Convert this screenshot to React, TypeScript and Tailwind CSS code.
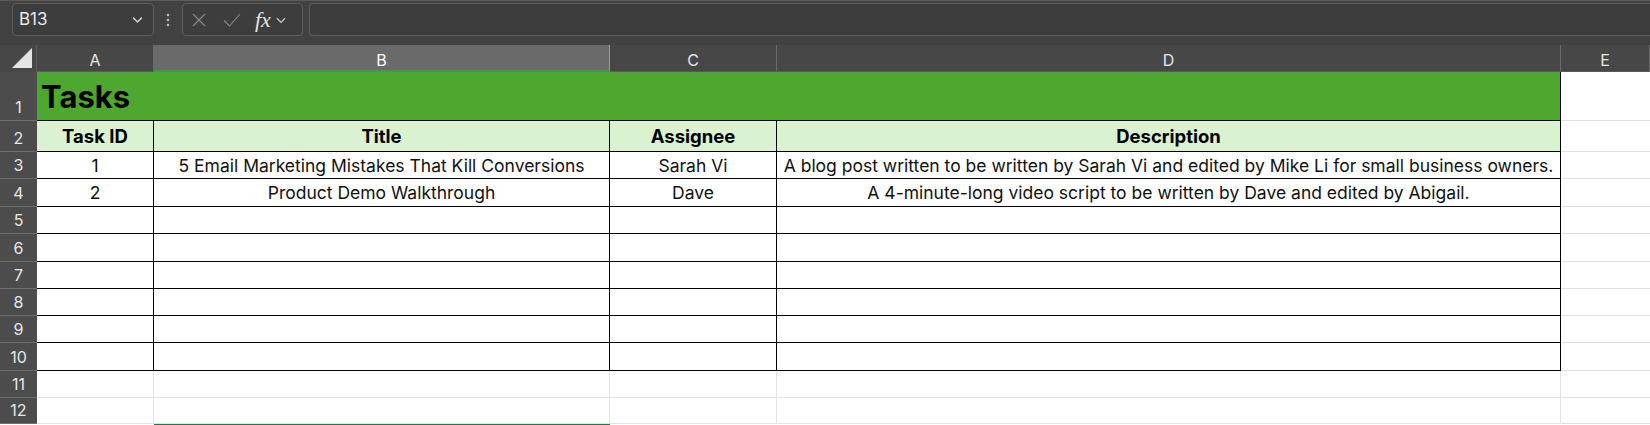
import React from "react";

const COLS = [
  { key: "A", w: 117 },
  { key: "B", w: 456 },
  { key: "C", w: 167 },
  { key: "D", w: 784 },
  { key: "E", w: 89 },
];

const ROW_H = [27, 28, 27, 28, 27, 27, 27, 28, 27, 26];

const TASKS = [
  {
    id: "1",
    title: "5 Email Marketing Mistakes That Kill Conversions",
    assignee: "Sarah Vi",
    description:
      "A blog post written to be written by Sarah Vi and edited by Mike Li for small business owners.",
  },
  {
    id: "2",
    title: "Product Demo Walkthrough",
    assignee: "Dave",
    description: "A 4-minute-long video script to be written by Dave and edited by Abigail.",
  },
];

function Chevron({ className }: { className?: string }) {
  return (
    <svg viewBox="0 0 12 12" className={className} fill="none" stroke="currentColor" strokeWidth="1.2">
      <path d="M2.5 4.5 6 8l3.5-3.5" />
    </svg>
  );
}

function Toolbar() {
  return (
    <div className="flex h-[45px] items-start border-t border-[#5c5c5c] bg-[#424242] pt-[2px]">
      <div className="ml-[12px] flex h-[33px] w-[142px] items-center justify-between rounded-[4px] border border-[#5e5e5e] bg-[#3d3d3d] pl-[6px] pr-[8px] text-[17px] text-[#e8e8e8]">
        <span>B13</span>
        <Chevron className="h-[15px] w-[15px] text-[#cfcfcf]" />
      </div>
      <div className="flex h-[33px] w-[28px] items-center justify-center">
        <svg viewBox="0 0 4 14" className="h-[14px] w-[4px]" fill="#bdbdbd">
          <circle cx="2" cy="2" r="1.3" />
          <circle cx="2" cy="7" r="1.3" />
          <circle cx="2" cy="12" r="1.3" />
        </svg>
      </div>
      <div className="flex h-[33px] w-[121px] items-center rounded-[4px] border border-[#5e5e5e] bg-[#3d3d3d] pl-[8px]">
        <svg viewBox="0 0 16 16" className="h-[16px] w-[16px]" fill="none" stroke="#8a8a8a" strokeWidth="1.1">
          <path d="M2 2l12 12M14 2 2 14" />
        </svg>
        <svg viewBox="0 0 18 16" className="ml-[16px] h-[16px] w-[18px]" fill="none" stroke="#8a8a8a" strokeWidth="1.1">
          <path d="M1 8.5 6.5 14 17 2" />
        </svg>
        <span className="ml-[14px] font-['Liberation_Serif',serif] text-[22px] italic leading-none text-[#e6e6e6]">
          fx
        </span>
        <Chevron className="ml-[3px] h-[14px] w-[14px] text-[#bdbdbd]" />
      </div>
      <div className="ml-[6px] h-[33px] flex-1 rounded-l-[4px] border border-r-0 border-[#5e5e5e] bg-[#3d3d3d]" />
    </div>
  );
}

function ColumnHeaders() {
  return (
    <div className="flex h-[27px] bg-[#474747] text-[16px] text-[#e6e6e6]">
      <div className="relative w-[37px] shrink-0 border-r border-[#5a5a5a]">
        <svg viewBox="0 0 20 20" className="absolute bottom-[4px] right-[4px] h-[20px] w-[20px]">
          <path d="M20 0V20H0Z" fill="#e4e4e4" />
        </svg>
      </div>
      {COLS.map((c) =>
        c.key === "B" ? (
          <div
            key={c.key}
            style={{ width: c.w }}
            className="flex shrink-0 items-center justify-center border-b-2 border-r border-b-[#3f9a4f] border-r-[#9a9a9a] bg-[#6a6a6a] pt-[4px] text-white"
          >
            {c.key}
          </div>
        ) : (
          <div
            key={c.key}
            style={{ width: c.w }}
            className="flex shrink-0 items-center justify-center border-r border-b border-r-[#6a6a6a] border-b-[#5a5a5a] pt-[3px]"
          >
            {c.key}
          </div>
        )
      )}
    </div>
  );
}

function RowHeader({ n, h }: { n: number; h: number }) {
  return (
    <div
      style={{ height: h }}
      className="flex w-[37px] shrink-0 items-end justify-center border-b border-[#6e6e6e] bg-[#4c4c4c] pb-[1px] text-[16px] text-[#e6e6e6]"
    >
      {n}
    </div>
  );
}

export default function App() {
  const dataRows = Array.from({ length: 10 }, (_, i) => i + 3);
  return (
    <div className="h-[425px] w-[1650px] overflow-hidden bg-white font-['Inter',sans-serif]">
      <Toolbar />
      <ColumnHeaders />

      {/* row 1: merged title */}
      <div className="flex h-[49px]">
        <RowHeader n={1} h={49} />
        <div className="flex w-[1524px] shrink-0 items-center border-b border-r border-black bg-[#4ea72e] pl-[4px] pt-[2px] text-[31px] font-bold text-black">
          Tasks
        </div>
        <div className="w-[89px] shrink-0 border-b border-[#e1e1e1]" />
      </div>

      {/* row 2: headings */}
      <div className="flex h-[31px]">
        <RowHeader n={2} h={31} />
        {["Task ID", "Title", "Assignee", "Description"].map((t, i) => (
          <div
            key={t}
            style={{ width: COLS[i].w }}
            className="flex shrink-0 items-center justify-center border-r border-b border-black bg-[#daf2d0] pt-[2px] text-[18.5px] font-bold text-black"
          >
            {t}
          </div>
        ))}
        <div className="w-[89px] shrink-0 border-b border-[#e1e1e1]" />
      </div>

      {dataRows.map((r, idx) => {
        const h = ROW_H[idx];
        const task = TASKS[r - 3];
        const inTable = r <= 10;
        const cells = task ? [task.id, task.title, task.assignee, task.description] : ["", "", "", ""];
        return (
          <div key={r} className="flex" style={{ height: h }}>
            <RowHeader n={r} h={h} />
            {cells.map((v, i) => (
              <div
                key={i}
                style={{ width: COLS[i].w }}
                className={
                  "flex shrink-0 items-center justify-center pt-[2px] text-[17.5px] text-[#111] " +
                  (inTable
                    ? "border-r border-b border-black"
                    : "border-r border-b border-[#e3e3e3]")
                }
              >
                {v}
              </div>
            ))}
            <div className="w-[89px] shrink-0 border-b border-[#e1e1e1]" />
          </div>
        );
      })}
      <div className="flex">
        <div className="w-[37px] shrink-0" />
        <div className="w-[117px] shrink-0" />
        <div className="h-[2px] w-[456px] shrink-0 bg-[#1f7a45]" />
      </div>
    </div>
  );
}
